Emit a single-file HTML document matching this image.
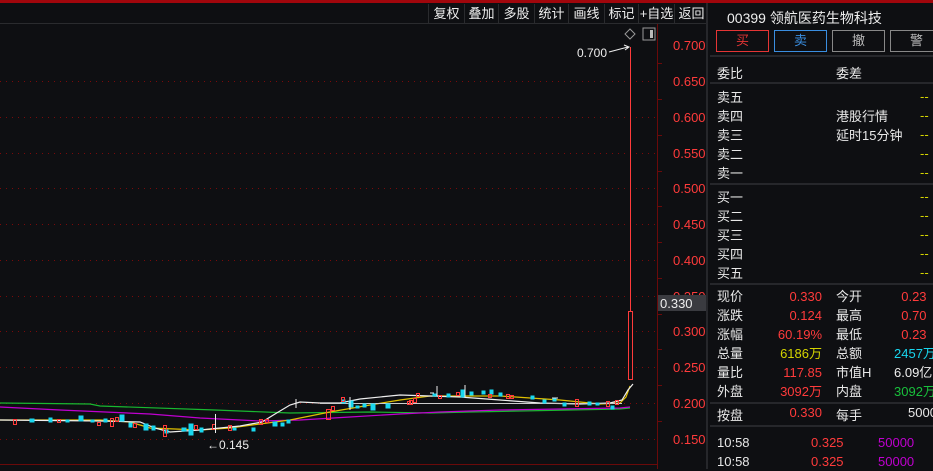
<!DOCTYPE html>
<html><head><meta charset="utf-8"><style>
*{margin:0;padding:0;box-sizing:border-box}
body{width:933px;height:469px;background:#0e0f12;overflow:hidden;position:relative;font-family:"Liberation Sans","Noto Sans CJK SC",sans-serif;font-size:13px;color:#e8e8e8}
.a{position:absolute;white-space:nowrap}
.tb{position:absolute;top:4px;height:19px;line-height:19px;font-size:13px;color:#eee;text-align:center;border-left:1px solid #2a2b2e}
.r{color:#ff3b3b}.y{color:#d4d400}.c{color:#19d7ef}.g{color:#19c03c}.m{color:#c000d0}.w{color:#eee}
.hl{position:absolute;left:710px;width:223px;height:2px;background:#26272b}
.lbl{position:absolute;left:717px;font-size:13px}
</style></head><body>
<div class="a" style="left:0;top:0;width:933px;height:3px;background:#a0060c"></div>
<div class="a" style="left:0;top:23px;width:706px;height:1px;background:#2a2b2e"></div>
<div class="tb" style="left:428px;width:36px">复权</div>
<div class="tb" style="left:464px;width:34px">叠加</div>
<div class="tb" style="left:498px;width:36px">多股</div>
<div class="tb" style="left:534px;width:34px">统计</div>
<div class="tb" style="left:568px;width:36px">画线</div>
<div class="tb" style="left:604px;width:34px">标记</div>
<div class="tb" style="left:638px;width:36px">+自选</div>
<div class="tb" style="left:674px;width:34px">返回</div>
<div class="a" style="left:706px;top:3px;width:2px;height:466px;background:#26272b"></div>

<svg class="a" style="left:0;top:0" width="706" height="469">
<g stroke="#7a0a0a" stroke-dasharray="1 5" stroke-width="1">
<line x1="0" y1="81.5" x2="656" y2="81.5"/><line x1="0" y1="117.5" x2="656" y2="117.5"/><line x1="0" y1="153.5" x2="656" y2="153.5"/><line x1="0" y1="188.5" x2="656" y2="188.5"/><line x1="0" y1="224.5" x2="656" y2="224.5"/><line x1="0" y1="260.5" x2="656" y2="260.5"/><line x1="0" y1="296.5" x2="656" y2="296.5"/><line x1="0" y1="331.5" x2="656" y2="331.5"/><line x1="0" y1="367.5" x2="656" y2="367.5"/><line x1="0" y1="403.5" x2="656" y2="403.5"/><line x1="0" y1="439.5" x2="656" y2="439.5"/>
</g>
<line x1="657.5" y1="24" x2="657.5" y2="469" stroke="#6a0a0a"/>
<line x1="0" y1="464.5" x2="657" y2="464.5" stroke="#6a0a0a"/>
<g stroke="#6a0a0a"><line x1="657" y1="63.5" x2="662" y2="63.5"/><line x1="657" y1="99.5" x2="662" y2="99.5"/><line x1="657" y1="135.5" x2="662" y2="135.5"/><line x1="657" y1="171.5" x2="662" y2="171.5"/><line x1="657" y1="206.5" x2="662" y2="206.5"/><line x1="657" y1="242.5" x2="662" y2="242.5"/><line x1="657" y1="278.5" x2="662" y2="278.5"/><line x1="657" y1="314.5" x2="662" y2="314.5"/><line x1="657" y1="349.5" x2="662" y2="349.5"/><line x1="657" y1="385.5" x2="662" y2="385.5"/><line x1="657" y1="421.5" x2="662" y2="421.5"/></g>
<g fill="#ff3b3b" font-size="13" font-family="Liberation Sans,sans-serif">
<text x="673" y="50">0.700</text><text x="673" y="86">0.650</text><text x="673" y="122">0.600</text><text x="673" y="158">0.550</text><text x="673" y="193">0.500</text><text x="673" y="229">0.450</text><text x="673" y="265">0.400</text><text x="673" y="301">0.350</text><text x="673" y="336">0.300</text><text x="673" y="372">0.250</text><text x="673" y="408">0.200</text><text x="673" y="444">0.150</text>
</g>
<rect x="658" y="295" width="48" height="16" fill="#3a3b40"/>
<text x="660" y="308" fill="#eee" font-size="13" font-family="Liberation Sans,sans-serif">0.330</text>
<path d="M630 29 L635 34 L630 39 L625 34Z" fill="none" stroke="#999"/>
<rect x="643" y="28" width="12" height="12" fill="none" stroke="#999"/><rect x="650" y="30" width="3" height="8" fill="#bbb"/>
<text x="577" y="57" fill="#eee" font-size="12" font-family="Liberation Sans,sans-serif">0.700</text>
<path d="M609 52 L628 47 M624 45 L629 47 L625 50" stroke="#eee" fill="none"/>
<line x1="630.5" y1="47" x2="630.5" y2="311" stroke="#ff3b3b"/>
<rect x="628.5" y="311.5" width="4" height="68" fill="#0e0f12" stroke="#ff3b3b"/>
<polyline fill="none" stroke="#19b830" stroke-width="1.2" points="0,403 90,404 100,406 215,410 290,413 370,412 430,413 470,412 520,411 620,409 630,408"/>
<polyline fill="none" stroke="#c000d0" stroke-width="1.2" points="0,407 60,410 150,414 200,418 260,421 300,420 350,417 400,414 440,412 500,410 560,409 620,408 630,407"/>
<polyline fill="none" stroke="#e0c000" stroke-width="1.2" points="0,420 100,420 130,422 150,428 200,430 230,428 260,424 290,420 330,412 370,405 400,400 430,396 500,396 560,400 600,404 620,403 626,397 630,386"/>
<polyline fill="none" stroke="#eee" stroke-width="1.2" points="0,420 100,421 140,422 155,428 170,432 200,430 240,426 262,422 275,414 290,405 300,402 320,403 340,403 360,399 400,395 430,396 460,397 500,400 540,403 580,404 610,403 622,400 628,390 633,384"/>
<line x1="320" y1="403.5" x2="622" y2="403.5" stroke="#ccc"/>
<g stroke-width="1">
<g fill="#19d7ef" stroke="#19d7ef">
<rect x="30" y="419" width="4" height="3"/><rect x="49" y="418" width="3" height="4"/><rect x="66" y="420" width="3" height="2"/><rect x="79" y="416" width="4" height="5"/><rect x="91" y="420" width="3" height="2"/><rect x="104" y="419" width="3" height="3"/><rect x="120" y="415" width="4" height="6"/><rect x="129" y="423" width="3" height="4"/><rect x="144" y="424" width="4" height="6"/><rect x="152" y="426" width="3" height="4"/><rect x="165" y="430" width="3" height="3"/><rect x="182" y="428" width="4" height="3"/><rect x="189" y="424" width="4" height="11"/><rect x="200" y="428" width="3" height="4"/><rect x="233" y="428" width="3" height="2"/><rect x="252" y="428" width="3" height="3"/><rect x="273" y="422" width="4" height="4"/><rect x="287" y="420" width="3" height="3"/><rect x="281" y="423" width="3" height="3"/><rect x="342" y="400" width="3" height="3"/><rect x="349" y="401" width="4" height="6"/><rect x="356" y="406" width="3" height="2"/><rect x="363" y="404" width="3" height="3"/><rect x="371" y="404" width="4" height="6"/><rect x="386" y="404" width="4" height="4"/><rect x="433" y="394" width="4" height="2"/><rect x="447" y="394" width="3" height="3"/><rect x="461" y="390" width="3" height="7"/><rect x="470" y="392" width="3" height="3"/><rect x="482" y="391" width="3" height="3"/><rect x="490" y="390" width="3" height="4"/><rect x="499" y="393" width="3" height="3"/><rect x="531" y="396" width="3" height="3"/><rect x="543" y="400" width="3" height="3"/><rect x="553" y="398" width="3" height="3"/><rect x="563" y="403" width="3" height="3"/><rect x="588" y="402" width="3" height="3"/><rect x="596" y="403" width="3" height="2"/><rect x="611" y="406" width="3" height="3"/>
</g>
<g fill="none" stroke="#ff3b3b">
<rect x="13.5" y="419.5" width="3" height="5"/><rect x="57.5" y="419.5" width="3" height="3"/><rect x="97.5" y="422.5" width="3" height="3"/><rect x="110.5" y="418.5" width="3" height="8"/><rect x="115.5" y="417.5" width="3" height="4"/><rect x="133.5" y="423.5" width="3" height="4"/><rect x="163.5" y="425.5" width="3" height="11"/><rect x="194.5" y="425.5" width="3" height="4"/><rect x="212.5" y="424.5" width="3" height="5"/><rect x="228.5" y="425.5" width="3" height="5"/><rect x="259.5" y="419.5" width="3" height="5"/><rect x="265.5" y="419.5" width="3" height="3"/><rect x="326.5" y="409.5" width="4" height="10"/><rect x="331.5" y="406.5" width="3" height="4"/><rect x="341.5" y="397.5" width="3" height="4"/><rect x="409.5" y="400.5" width="3" height="4"/><rect x="413.5" y="398.5" width="3" height="4"/><rect x="416.5" y="393.5" width="3" height="3"/><rect x="407.5" y="401.5" width="3" height="3"/><rect x="438.5" y="395.5" width="3" height="3"/><rect x="456.5" y="392.5" width="3" height="3"/><rect x="488.5" y="394.5" width="3" height="3"/><rect x="506.5" y="394.5" width="3" height="4"/><rect x="510.5" y="395.5" width="3" height="3"/><rect x="575.5" y="399.5" width="3" height="7"/><rect x="606.5" y="401.5" width="3" height="5"/><rect x="615.5" y="400.5" width="3" height="4"/>
</g>
<g stroke="#eee">
<line x1="215.5" y1="414" x2="215.5" y2="433"/><line x1="296" y1="399" x2="296" y2="408"/><line x1="350" y1="397" x2="350" y2="410"/><line x1="437" y1="386" x2="437" y2="396"/><line x1="465" y1="385" x2="465" y2="398"/><line x1="430" y1="393" x2="434" y2="393"/><line x1="552" y1="398" x2="558" y2="398"/>
</g>
</g>
<text x="207" y="449" fill="#eee" font-size="12" font-family="Liberation Sans,sans-serif">←0.145</text>
</svg>

<div class="a w" style="left:727px;top:8px;font-size:14px">00399 领航医药生物科技</div>
<div class="a" style="left:716px;top:30px;width:53px;height:22px;border:1px solid #e53535;color:#e53535;text-align:center;line-height:20px">买</div>
<div class="a" style="left:774px;top:30px;width:53px;height:22px;border:1px solid #3a8ee0;color:#3a8ee0;text-align:center;line-height:20px">卖</div>
<div class="a" style="left:832px;top:30px;width:53px;height:22px;border:1px solid #888;color:#bbb;text-align:center;line-height:20px">撤</div>
<div class="a" style="left:890px;top:30px;width:53px;height:22px;border:1px solid #888;color:#bbb;text-align:center;line-height:20px">警</div>
<div class="hl" style="top:55px"></div>
<div class="lbl" style="top:63px">委比</div><div class="a" style="left:836px;top:63px">委差</div>
<div class="hl" style="top:82px"></div>
<div class="lbl" style="top:87px">卖五</div><div class="lbl" style="top:106px">卖四</div><div class="lbl" style="top:125px">卖三</div><div class="lbl" style="top:144px">卖二</div><div class="lbl" style="top:163px">卖一</div>
<div class="a" style="left:836px;top:106px">港股行情</div><div class="a" style="left:836px;top:125px">延时15分钟</div>
<div class="a" style="left:920px;top:87px;line-height:19px"><span class="y">--</span><br><span class="y">--</span><br><span class="y">--</span><br><span class="y">--</span><br><span class="y">--</span></div>
<div class="hl" style="top:183px"></div>
<div class="lbl" style="top:187px">买一</div><div class="lbl" style="top:206px">买二</div><div class="lbl" style="top:225px">买三</div><div class="lbl" style="top:244px">买四</div><div class="lbl" style="top:263px">买五</div>
<div class="a" style="left:920px;top:187px;line-height:19px"><span class="y">--</span><br><span class="y">--</span><br><span class="y">--</span><br><span class="y">--</span><br><span class="y">--</span></div>
<div class="hl" style="top:283px"></div>
<div class="lbl" style="top:287px;line-height:19px">现价<br>涨跌<br>涨幅<br>总量<br>量比<br>外盘</div>
<div class="a" style="right:111px;top:287px;line-height:19px;text-align:right"><span class="r">0.330</span><br><span class="r">0.124</span><br><span class="r">60.19%</span><br><span class="y">6186万</span><br><span class="r">117.85</span><br><span class="r">3092万</span></div>
<div class="a" style="left:836px;top:287px;line-height:19px">今开<br>最高<br>最低<br>总额<br>市值H<br>内盘</div>
<div class="a" style="left:894px;top:287px;line-height:19px"><span class="r">&nbsp;&nbsp;0.23</span><br><span class="r">&nbsp;&nbsp;0.70</span><br><span class="r">&nbsp;&nbsp;0.23</span><br><span class="c">2457万</span><br><span class="w">6.09亿</span><br><span class="g">3092万</span></div>
<div class="hl" style="top:402px"></div>
<div class="lbl" style="top:405px">按盘</div><div class="a r" style="right:111px;top:405px">0.330</div>
<div class="a" style="left:836px;top:405px">每手</div><div class="a" style="left:908px;top:405px">5000</div>
<div class="hl" style="top:425px"></div>
<div class="lbl" style="top:433px;line-height:19px">10:58<br>10:58</div>
<div class="a r" style="left:811px;top:433px;line-height:19px">0.325<br>0.325</div>
<div class="a m" style="left:878px;top:433px;line-height:19px">50000<br>50000</div>
</body></html>
